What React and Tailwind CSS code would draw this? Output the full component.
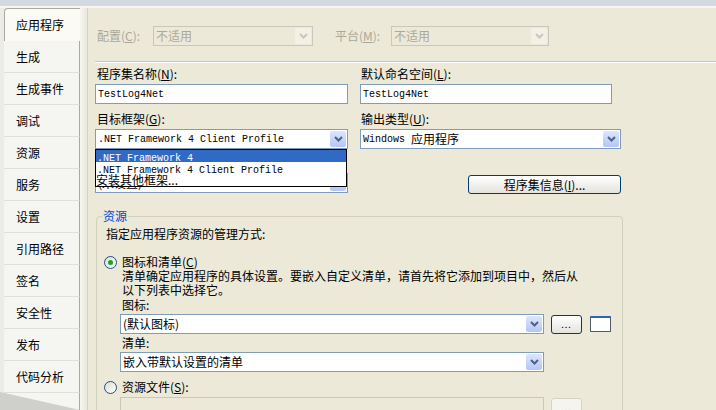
import React from "react";

const tabs = ["应用程序", "生成", "生成事件", "调试", "资源", "服务", "设置", "引用路径", "签名", "安全性", "发布", "代码分析"];

function Chevron({ color }) {
  return (
    <svg width="9" height="6" viewBox="0 0 9 6">
      <path d="M1 1 L4.5 4.5 L8 1" fill="none" stroke={color} strokeWidth="2" />
    </svg>
  );
}

function Combo({ className, disabled, children }) {
  return (
    <div
      className={`flex h-[20px] items-stretch border ${
        disabled ? "border-[#c9c7ba] bg-[#ece9d8] text-[#aca899]" : "border-[#7f9db9] bg-white text-black"
      } ${className}`}
    >
      <div className="flex flex-1 items-center overflow-hidden whitespace-nowrap pl-[2px]">{children}</div>
      <div
        className={`my-[1px] mr-[1px] flex w-[16px] items-center justify-center rounded-[2px] ${
          disabled ? "bg-[#f3f1e6]" : "bg-gradient-to-b from-[#dce7fe] to-[#b3c6f5]"
        }`}
      >
        <Chevron color={disabled ? "#c9c7ba" : "#4d6185"} />
      </div>
    </div>
  );
}

function Mono({ children }) {
  return <span className="font-['Liberation_Mono',monospace] text-[10px]">{children}</span>;
}

function Radio({ checked }) {
  return (
    <span className="flex h-[13px] w-[13px] items-center justify-center rounded-full border border-[#1c5180] bg-gradient-to-br from-[#dcdcd6] to-white">
      {checked && <span className="h-[5px] w-[5px] rounded-full bg-[#21a121]" />}
    </span>
  );
}

export default function App() {
  return (
    <div className="flex h-[410px] w-[716px] flex-col overflow-hidden bg-[#ece9d8] font-['Noto_Sans_CJK_SC',sans-serif] text-[12px] text-black">
      <div className="h-[8px] shrink-0 border-b-2 border-[#f6f5f0] bg-[#d3d9e2]" />
      <div className="flex min-h-0 flex-1 overflow-hidden">
        {/* 左侧标签 */}
        <div className="relative flex w-[80px] shrink-0 flex-col bg-[#ebebe8]">
          <div className="ml-[4px] h-[33px] shrink-0 rounded-tl-[4px] border-l border-t border-[#a9a9a2] bg-[#fbfaf5] pl-[11px] leading-[32px]">
            {tabs[0]}
          </div>
          {tabs.slice(1).map((t) => (
            <div
              key={t}
              className="ml-[4px] h-[32px] shrink-0 border-b border-r border-b-[#e0dfd9] border-r-[#a9a9a2] bg-[#f5f5f2] pl-[12px] leading-[32px]"
            >
              {t}
            </div>
          ))}
          <div className="flex-1 border-r border-[#a9a9a2] bg-[#f5f5f2]" />
          <svg className="absolute bottom-0 left-0" width="80" height="18" viewBox="0 0 80 18">
            <polygon points="0,0 80,18 0,18" fill="#cfcfcb" />
          </svg>
        </div>
        <div className="w-[8px] shrink-0 border-r border-[#d6d3c4] bg-gradient-to-r from-[#f7f6f1] to-[#eae8dc]" />

        {/* 内容 */}
        <div className="flex min-w-0 flex-1 flex-col">
          <div className="mt-[18px] flex items-center pl-[7px]">
            <span className="w-[58px] pl-[2px] text-[#aca899]">
              配置(<u>C</u>):
            </span>
            <Combo className="w-[160px]" disabled>
              不适用
            </Combo>
            <span className="ml-[20px] w-[58px] pl-[2px] text-[#aca899]">
              平台(<u>M</u>):
            </span>
            <Combo className="w-[158px]" disabled>
              不适用
            </Combo>
          </div>

          <div className="ml-[7px] mt-[15px] border-b border-t border-b-white border-t-[#c9c6b6]" />

          <div className="grid grid-cols-[253px_261px] gap-x-[12px] pl-[7px]">
            <div>
              <div className="mt-[1px] h-[20px] pl-[2px] leading-[20px]">
                程序集名称(<u>N</u>):
              </div>
              <div className="flex h-[20px] items-center border border-[#7f9db9] bg-white pl-[2px]">
                <Mono>TestLog4Net</Mono>
              </div>
              <div className="mt-[5px] h-[20px] pl-[2px] leading-[20px]">
                目标框架(<u>G</u>):
              </div>
              <div className="relative">
                <Combo className="w-[253px]">
                  <Mono>.NET Framework 4 Client Profile</Mono>
                </Combo>
                <div className="absolute left-0 top-full z-10 w-[252px] border border-black bg-white">
                  <div className="h-[12px] bg-[#316ac5] pl-[1px] leading-[12px] text-white">
                    <Mono>.NET Framework 4</Mono>
                  </div>
                  <div className="h-[12px] pl-[1px] leading-[12px]">
                    <Mono>.NET Framework 4 Client Profile</Mono>
                  </div>
                  <div className="h-[12px] leading-[12px]">安装其他框架...</div>
                </div>
              </div>
              <div className="mt-[4px] h-[20px] pl-[2px] leading-[20px]">
                启动对象(<u>O</u>):
              </div>
              <Combo className="w-[253px]">(未设置)</Combo>
            </div>
            <div>
              <div className="mt-[1px] h-[20px] pl-[1px] leading-[20px]">
                默认命名空间(<u>L</u>):
              </div>
              <div className="flex h-[20px] w-[252px] items-center border border-[#7f9db9] bg-white pl-[2px]">
                <Mono>TestLog4Net</Mono>
              </div>
              <div className="mt-[5px] h-[20px] pl-[1px] leading-[20px]">
                输出类型(<u>U</u>):
              </div>
              <Combo className="w-[261px]">
                <Mono>Windows</Mono>
                <span className="ml-[6px]">应用程序</span>
              </Combo>
              <div className="mt-[26px] flex justify-end">
                <button className="h-[19px] w-[153px] rounded-[3px] border border-[#003c74] bg-gradient-to-b from-white to-[#e4e3dc] leading-[17px]">
                  程序集信息(<u>I</u>)...
                </button>
              </div>
            </div>
          </div>

          {/* 资源 */}
          <fieldset className="ml-[8px] mt-[15px] w-[527px] shrink-0 rounded-[4px] border border-[#d0d0bf] pb-[20px]">
            <legend className="ml-[5px] px-[1px] leading-[14px] text-[#0046d5]">资源</legend>
            <div className="pl-[9px]">
              <div className="mt-[3px] leading-[16px]">指定应用程序资源的管理方式:</div>
              <div className="ml-[-2px] mt-[13px] flex items-center gap-[5px] leading-[14px]">
                <Radio checked />
                <span>
                  图标和清单(<u>C</u>)
                </span>
              </div>
              <div className="ml-[16px] whitespace-nowrap leading-[14px]">
                清单确定应用程序的具体设置。要嵌入自定义清单，请首先将它添加到项目中，然后从
                <br />
                以下列表中选择它。
              </div>
              <div className="ml-[16px] mt-[1px] leading-[14px]">图标:</div>
              <div className="ml-[14px] mt-[2px] flex items-center">
                <Combo className="w-[424px]">(默认图标)</Combo>
                <button className="ml-[7px] h-[19px] w-[31px] rounded-[3px] border border-[#003c74] bg-gradient-to-b from-white to-[#e4e3dc] text-[9px] leading-[15px] tracking-[1px]">
                  ...
                </button>
                <div className="ml-[8px] h-[16px] w-[21px] rounded-[1px] border border-t-2 border-[#555a64] border-t-[#2a64c4] bg-white" />
              </div>
              <div className="ml-[16px] mt-[2px] leading-[14px]">清单:</div>
              <div className="ml-[14px] mt-[2px]">
                <Combo className="w-[424px]">嵌入带默认设置的清单</Combo>
              </div>
              <div className="ml-[-2px] mt-[8px] flex items-center gap-[5px] leading-[14px]">
                <Radio />
                <span>
                  资源文件(<u>S</u>):
                </span>
              </div>
              <div className="ml-[14px] mt-[3px] flex items-center">
                <div className="h-[20px] w-[424px] border border-[#c9c7ba] bg-[#ece9d8]" />
                <button className="ml-[7px] h-[19px] w-[31px] rounded-[3px] border border-[#d6d3c6] bg-[#f5f4ee] text-[9px] leading-[15px] tracking-[1px] text-[#c9c7ba]">
                  ...
                </button>
              </div>
            </div>
          </fieldset>
        </div>
      </div>
    </div>
  );
}
